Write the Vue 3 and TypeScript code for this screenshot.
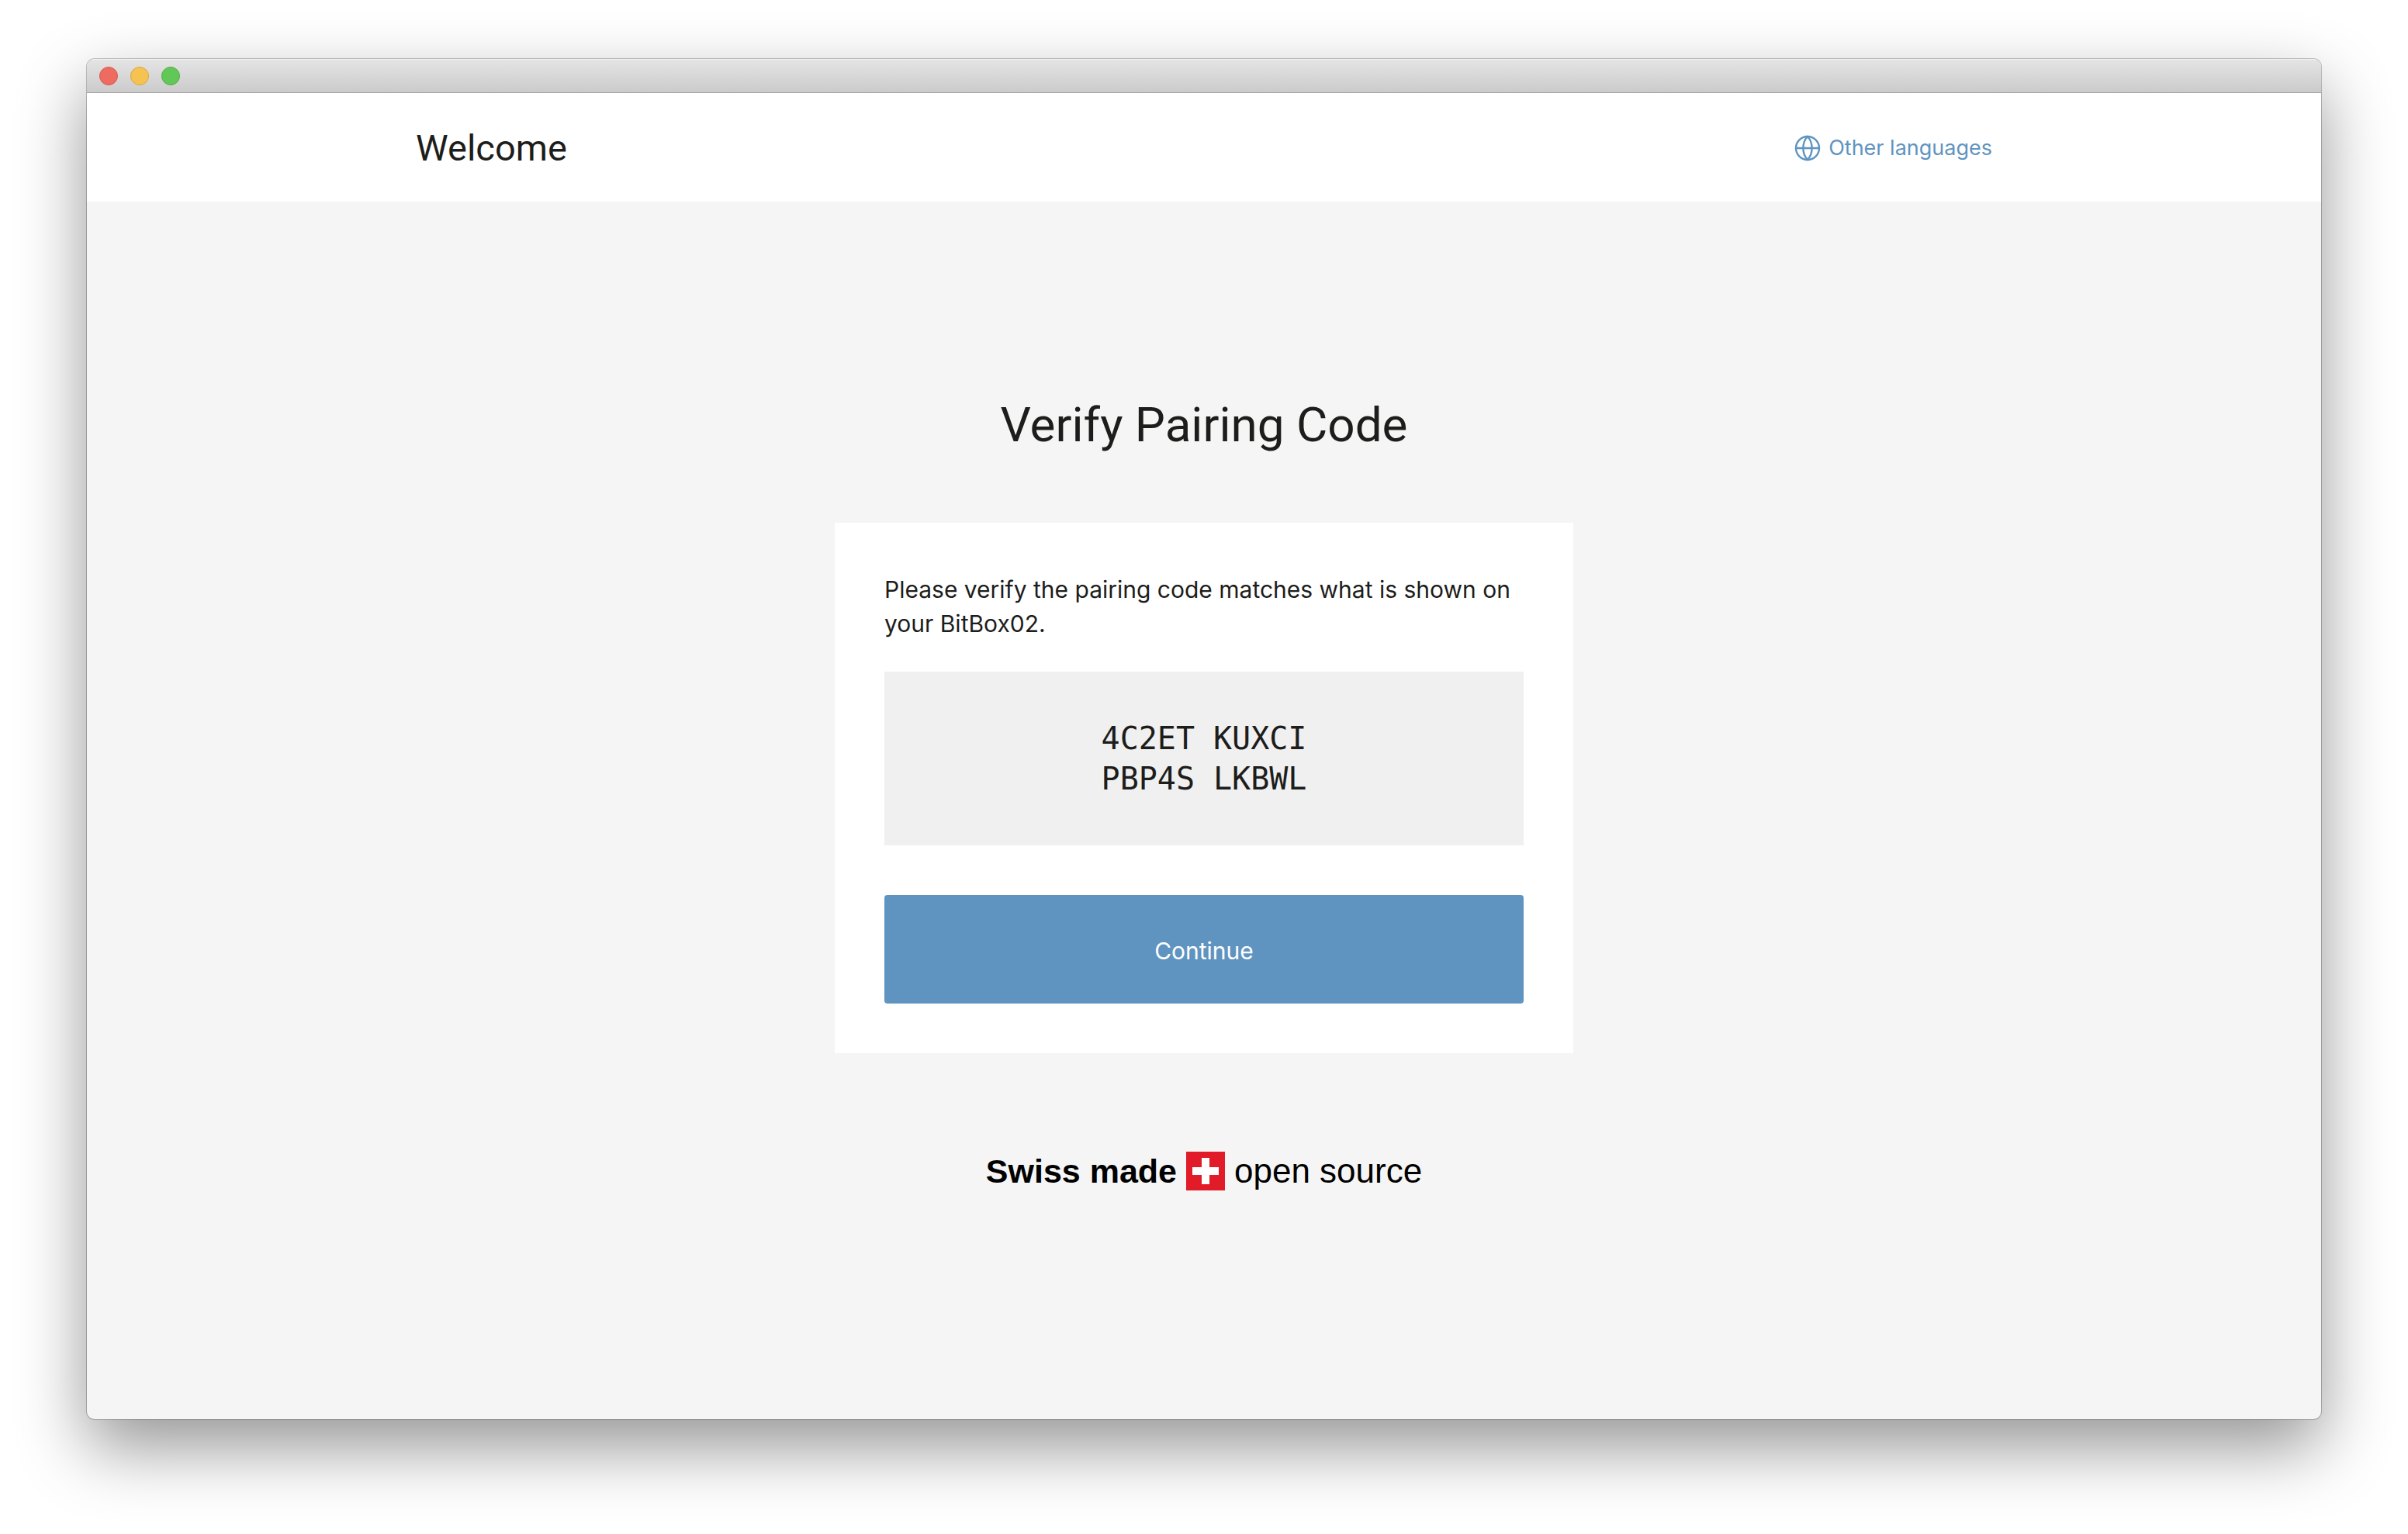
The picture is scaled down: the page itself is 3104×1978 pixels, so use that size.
<script setup lang="ts">
const codeLines: string[] = ['4C2ET KUXCI', 'PBP4S LKBWL']
const lights: string[] = ['close', 'minimize', 'zoom']
</script>

<template>
  <div class="desktop">
    <div class="window">
      <div class="titlebar">
        <button v-for="light in lights" :key="light" type="button" class="light" :class="light" :aria-label="light"></button>
      </div>
      <header class="header">
        <h1 class="welcome">Welcome</h1>
        <a href="#" class="languages">
          <svg class="globe" viewBox="0 0 34 34" fill="none" stroke="currentColor" stroke-width="2.4" aria-hidden="true">
            <circle cx="17" cy="17" r="15" />
            <path d="M2 17h30" />
            <path d="M17 2c-7.500 8-7.500 22 0 30c7.500-8 7.500-22 0-30z" />
          </svg>
          <span>Other languages</span>
        </a>
      </header>
      <main class="main">
        <h2 class="title">Verify Pairing Code</h2>
        <section class="card">
          <p class="hint">Please verify the pairing code matches what is shown on your BitBox02.</p>
          <div class="code">
            <div v-for="line in codeLines" :key="line">{{ line }}</div>
          </div>
          <button type="button" class="continue">Continue</button>
        </section>
        <footer class="swiss">
          <strong class="made">Swiss made</strong>
          <svg class="flag" viewBox="0 0 50 50" aria-hidden="true">
            <path fill="#e11b28" d="M0 0h50v50H0z" />
            <path fill="#fff" d="M20 8h10v12h12v10H30v12H20V30H8V20h12z" />
          </svg>
          <span>open source</span>
        </footer>
      </main>
    </div>
  </div>
</template>

<style>
body {
  margin: 0;
  background: #fff;
}
</style>

<style scoped>
.desktop {
  box-sizing: border-box;
  min-height: 100vh;
  padding: 76px 112px 148px;
  display: flex;
  font-family: Inter, "Liberation Sans", sans-serif;
  color: #1d1d1b;
}

.window {
  flex: 1;
  display: flex;
  flex-direction: column;
  border-radius: 10px;
  overflow: hidden;
  background: #f5f5f5;
  box-shadow: 0 0 0 1px rgba(0, 0, 0, 0.22), 0 36px 88px rgba(0, 0, 0, 0.42);
}

.titlebar {
  box-sizing: border-box;
  height: 44px;
  padding: 0 16px;
  display: flex;
  align-items: center;
  gap: 16px;
  background: linear-gradient(#e4e4e4, #cbcbcb);
  border-top: 1px solid #f2f2f2;
  border-bottom: 1px solid #a0a0a0;
}

.light {
  box-sizing: border-box;
  width: 24px;
  height: 24px;
  padding: 0;
  border-radius: 50%;
}

.close {
  background: #ed6b60;
  border: 1px solid #d75a4f;
}

.minimize {
  background: #f5c351;
  border: 1px solid #d9a53f;
}

.zoom {
  background: #61c756;
  border: 1px solid #54ab45;
}

.header {
  box-sizing: border-box;
  height: 140px;
  padding: 2px 424px 0;
  display: flex;
  align-items: center;
  justify-content: space-between;
  background: #fff;
}

.welcome,
.title {
  font-family: Roboto, Inter, sans-serif;
  font-weight: 400;
}

.welcome {
  margin: 0;
  font-size: 47px;
  line-height: 56px;
}

.languages {
  display: flex;
  align-items: center;
  gap: 10px;
  color: #5f94c1;
  font-size: 27px;
  line-height: 36px;
  text-decoration: none;
}

.globe {
  width: 34px;
  height: 34px;
}

.main {
  flex: 1;
  display: flex;
  flex-direction: column;
  align-items: center;
  justify-content: center;
  padding-bottom: 50px;
}

.title {
  margin: 0 0 80px;
  font-size: 62px;
  line-height: 92px;
}

.card {
  box-sizing: border-box;
  width: 952px;
  padding: 64px;
  display: flex;
  flex-direction: column;
  background: #fff;
}

.hint {
  margin: 0 0 40px;
  font-size: 30px;
  line-height: 44px;
}

.code {
  margin-bottom: 64px;
  padding: 60px 0;
  background: #f0f0f0;
  font-family: "DejaVu Sans Mono", monospace;
  font-size: 40px;
  line-height: 52px;
  text-align: center;
}

.continue {
  height: 140px;
  padding: 4px 0 0;
  border: 0;
  border-radius: 4px;
  background: #5f94c1;
  color: #fff;
  font-family: inherit;
  font-size: 30px;
}

.swiss {
  margin-top: 124px;
  display: flex;
  align-items: center;
  gap: 12px;
  color: #000;
  font-family: "Liberation Sans", sans-serif;
  font-size: 44px;
  line-height: 56px;
}

.made {
  font-size: 43px;
}

.flag {
  width: 50px;
  height: 50px;
}
</style>
